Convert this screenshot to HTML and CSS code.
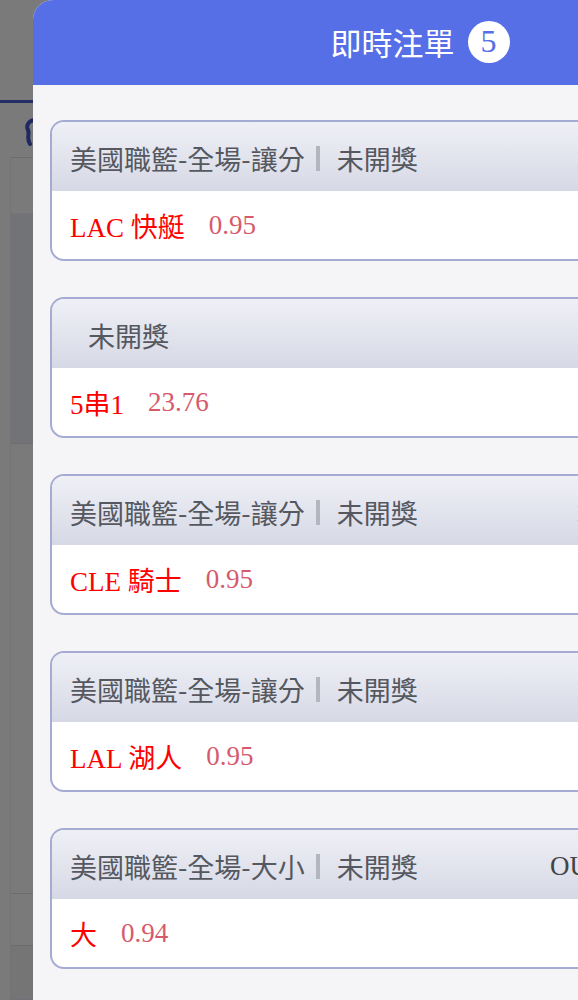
FILE: index.html
```html
<!DOCTYPE html>
<html lang="zh-Hant">
<head>
  <meta charset="UTF-8">
  <meta name="viewport" content="width=device-width, initial-scale=1">
  <title>即時注單</title>
  <link rel="stylesheet" href="styles.css">
</head>
<body>
  <!-- Page underneath the drawer -->
  <div class="page">
    <div class="page-top"></div>
    <div class="page-nav">
      <svg class="nav-icon" width="14" height="28" viewBox="0 0 14 28">
        <path d="M12 2 C4 2 2 8 4 12 C6 16 2 20 6 26" fill="none" stroke="#3f56c9" stroke-width="4" stroke-linecap="round"/>
      </svg>
    </div>
    <div class="page-list">
      <div class="row row-info"><span class="dot-mark"></span><span class="dot-mark"></span></div>
      <div class="row row-blue"></div>
      <div class="row row-plain"><span class="ball"></span></div>
      <div class="row row-long"><span class="dot-mark"></span><span class="dot-mark"></span></div>
      <div class="row row-grey"></div>
      <div class="row row-blue row-last"><span class="ball"></span></div>
    </div>
  </div>
  <div class="mask"></div>

  <!-- Bets drawer -->
  <div class="drawer">
    <div class="drawer-head">
      <span class="drawer-title">即時注單</span>
      <span class="badge">5</span>
    </div>
    <div class="drawer-body">
      <div class="card">
        <div class="card-head">
          <span class="game">美國職籃-全場-讓分</span>
          <span class="status">未開獎</span>
          <span class="extra">1</span>
        </div>
        <div class="card-body"><span class="pick">LAC 快艇</span><span class="odds">0.95</span></div>
      </div>

      <div class="card">
        <div class="card-head">
          <span class="status plain">未開獎</span>
        </div>
        <div class="card-body"><span class="pick">5串1</span><span class="odds">23.76</span></div>
      </div>

      <div class="card">
        <div class="card-head">
          <span class="game">美國職籃-全場-讓分</span>
          <span class="status">未開獎</span>
          <span class="extra">1</span>
        </div>
        <div class="card-body"><span class="pick">CLE 騎士</span><span class="odds">0.95</span></div>
      </div>

      <div class="card">
        <div class="card-head">
          <span class="game">美國職籃-全場-讓分</span>
          <span class="status">未開獎</span>
          <span class="extra">1</span>
        </div>
        <div class="card-body"><span class="pick">LAL 湖人</span><span class="odds">0.95</span></div>
      </div>

      <div class="card">
        <div class="card-head">
          <span class="game">美國職籃-全場-大小</span>
          <span class="status">未開獎</span>
          <span class="extra">OU</span>
        </div>
        <div class="card-body"><span class="pick">大</span><span class="odds">0.94</span></div>
      </div>
    </div>
  </div>
</body>
</html>
```

FILE: styles.css
```css
/* Reset */
* {
  margin: 0;
  padding: 0;
  box-sizing: border-box;
}
html, body {
  height: 100%;
  overflow: hidden;
}
body {
  font-family: "Noto Sans CJK TC", "Noto Sans", sans-serif;
  background: #fff;
}

/* Page behind the drawer */
.page {
  width: 100%;
}
.page-top {
  height: 100px;
  background: #fff;
}
.page-nav {
  height: 57px;
  border-top: 3px solid #4a60d6;
  padding: 15px 0 0 24px;
}
.page-list {
  margin-left: 10px;
  border-left: 1px solid #f0f0f0;
}
.row {
  border-top: 1px solid #e4e4ea;
  display: flex;
  flex-direction: column;
  align-items: flex-end;
  gap: 16px;
  padding-top: 20px;
}
.row-info {
  height: 56px;
}
.row-blue {
  height: 230px;
  background: #eef0f7;
  border-top-color: #f6f6f8;
}
.row-plain {
  height: 450px;
  padding-top: 29px;
}
.row-long {
  height: 52px;
}
.row-grey {
  height: 52px;
  background: #f4f4f6;
}
.row-last {
  height: 120px;
}
.dot-mark {
  width: 4px;
  height: 2px;
  background: #222;
}
.ball {
  width: 16px;
  height: 16px;
  border-radius: 50%;
  background: #111;
  margin-right: -14px;
}
.mask {
  position: fixed;
  inset: 0;
  background: rgba(0, 0, 0, 0.52);
}

/* Drawer */
.drawer {
  position: fixed;
  top: 0;
  bottom: 0;
  left: 33px;
  width: 774px;
  background: #f5f5f7;
  border-top-left-radius: 20px;
  overflow: hidden;
}
.drawer-head {
  height: 85px;
  background: #566fe6;
  display: flex;
  justify-content: center;
  align-items: center;
  gap: 13px;
  padding-bottom: 2px;
}
.drawer-title {
  color: #fff;
  font-size: 31px;
}
.badge {
  width: 42px;
  height: 42px;
  border-radius: 50%;
  background: #fff;
  color: #566fe6;
  font-family: "Liberation Serif", serif;
  font-size: 32px;
  display: flex;
  justify-content: center;
  align-items: center;
}
.drawer-body {
  padding: 35px 17px;
  display: flex;
  flex-direction: column;
  gap: 36px;
}

/* Bet card */
.card {
  border: 2px solid #a6abd3;
  border-radius: 14px;
  overflow: hidden;
  background: #fff;
}
.card-head {
  height: 69px;
  background: linear-gradient(#eff0f6, #d6d8e5);
  display: flex;
  align-items: center;
  padding: 4px 0 0 18px;
  font-size: 27px;
  color: #55585f;
}
.status {
  border-left: 4px solid #b3b5bf;
  margin-left: 11px;
  padding-left: 17px;
  line-height: 25px;
}
.status.plain {
  border-left: none;
  margin-left: 0;
  padding-left: 18px;
}
.extra {
  margin-left: auto;
  margin-right: 199px;
  font-family: "Liberation Serif", serif;
  color: #444;
}
.card-body {
  height: 68px;
  display: flex;
  align-items: center;
  padding-left: 18px;
  font-family: "Liberation Serif", "Noto Sans CJK TC", serif;
  font-size: 27px;
}
.pick {
  color: #f00;
}
.odds {
  color: #d65a6c;
  margin-left: 24px;
}
```
